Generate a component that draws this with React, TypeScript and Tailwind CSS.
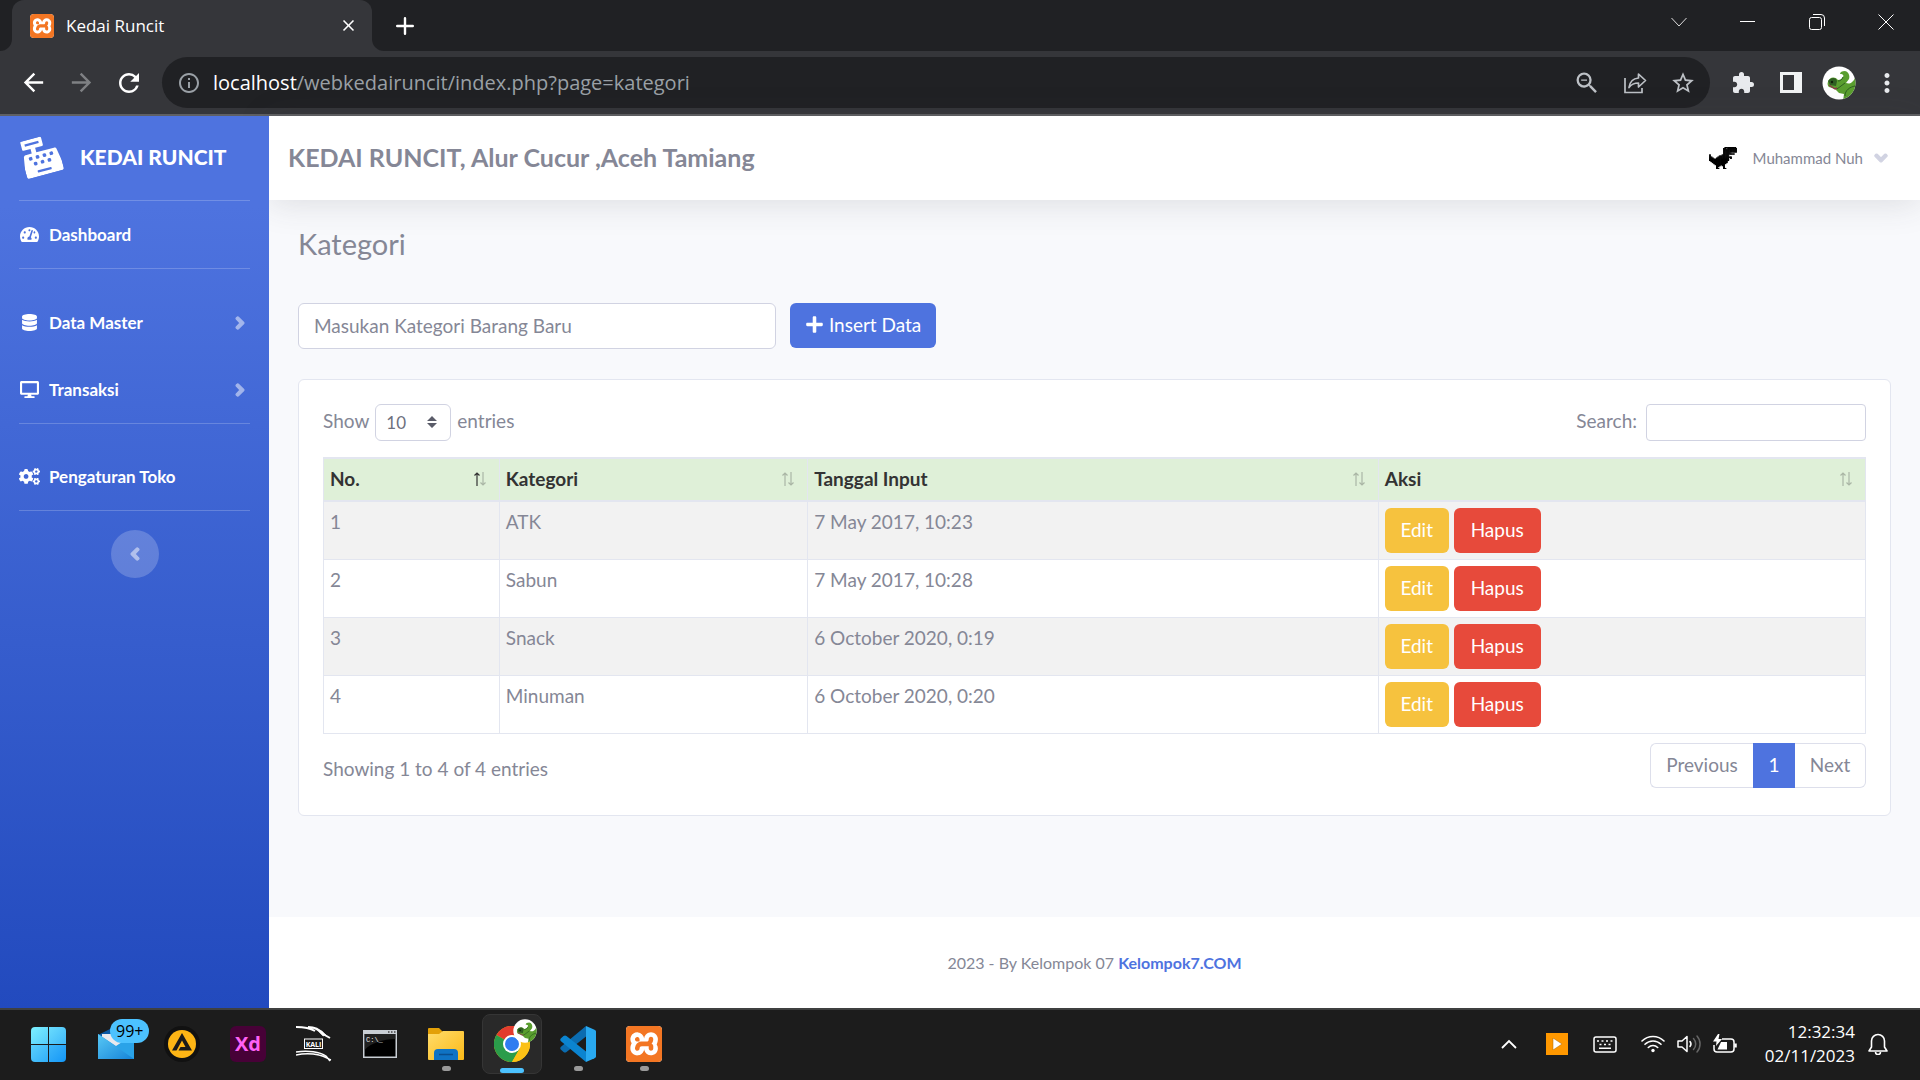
import React from "react";
import {
  FaTachometerAlt,
  FaDatabase,
  FaDesktop,
  FaCogs,
  FaAngleRight,
  FaAngleLeft,
  FaAngleDown,
  FaCashRegister,
  FaPlus,
} from "react-icons/fa";
import {
  MdArrowBack,
  MdArrowForward,
  MdRefresh,
  MdInfoOutline,
  MdZoomOut,
  MdStarBorder,
  MdExtension,
  MdMoreVert,
  MdClose,
  MdAdd,
} from "react-icons/md";
import { SiXampp } from "react-icons/si";

/* ---------- Drawings ---------- */

function XamppIcon({ className }: { className: string }) {
  return (
    <span className={`${className} grid shrink-0 overflow-hidden bg-white text-[#f37623]`}>
      <SiXampp className="size-full scale-105" />
    </span>
  );
}

function DinoAvatar({ className }: { className: string }) {
  return (
    <svg viewBox="0 0 34 34" className={className} aria-hidden="true">
      <clipPath id="avatar-clip">
        <circle cx="17" cy="17" r="16.5" />
      </clipPath>
      <circle cx="17" cy="17" r="16.5" fill="#fff" />
      <g clipPath="url(#avatar-clip)">
        <path
          d="M6 16c1-5 7-6 10-2 2 0 4-1 5-3 1-2 0-3-3-3 0-2 2-3 5-3 4 1 5 5 4 8l-3 4c3 1 6 1 9-5l2 4v12l-9 7h-5l1-7-5-1-4-4-6-2c-1-1-2-3-1-5z"
          fill="#5a9e2f"
        />
        <path d="M6 15c3-4 8-4 9 0l-1 5-6-1z" fill="#2f5f22" />
        <path d="M7 19l6 4 2-1" fill="none" stroke="#8c3a4a" strokeWidth="1.4" />
        <path d="M23 30c0-6 5-9 10-10M15 23l8-6M21 11c-1 3-3 4-5 4" fill="none" stroke="#2f5f22" strokeWidth="1" />
        <circle cx="10" cy="16" r="1.200" fill="#10210c" />
      </g>
    </svg>
  );
}

const DINO_ROWS = [
  "...........########.",
  "..........##.#######",
  "..........##########",
  "..........##########",
  "..........##########",
  "..........#####.....",
  "..........########..",
  "#........#####......",
  "#......#######......",
  "##....##########....",
  "###..#########.#....",
  "##############......",
  "##############......",
  ".############.......",
  "..###########.......",
  "...#########........",
  "....#######.........",
  ".....###.##.........",
  ".....##...#.........",
  ".....#....#.........",
  ".....##...##........",
];

function PixelDino() {
  return (
    <svg viewBox="0 0 20 21" preserveAspectRatio="none" className="h-[22px] w-7" aria-hidden="true">
      {DINO_ROWS.flatMap((row, y) =>
        row
          .split("")
          .map((c, x) =>
            c === "#" ? <rect key={`${x}-${y}`} x={x} y={y} width="1.4" height="1.4" /> : null,
          ),
      )}
    </svg>
  );
}

function ShareIcon() {
  return (
    <svg viewBox="0 0 24 24" className="size-6" fill="none" stroke="#bdc1c6" strokeWidth="1.7" aria-hidden="true">
      <path d="M2 7v14.500h17V17" />
      <path d="M15.500 3l7 6.500-7 6.500v-4c-4 0-7 1-9.500 4.500C6.700 11 10 7.500 15.500 7z" strokeLinejoin="round" />
    </svg>
  );
}

function SortArrows({ active }: { active?: boolean }) {
  return (
    <svg viewBox="0 0 14 16" className="mr-1.5 h-4 w-3.5 shrink-0" fill="none" stroke="#333" strokeWidth="1.200" aria-hidden="true">
      <path d="M4 15V2M1.500 4.500L4 2l2.500 2.500" opacity={active ? 1 : 0.3} />
      <path d="M10 1v13M7.500 11.500L10 14l2.500-2.500" opacity="0.3" />
    </svg>
  );
}

function MailIcon() {
  return (
    <svg viewBox="0 0 36 30" className="h-[30px] w-9" aria-hidden="true">
      <defs>
        <linearGradient id="mail-front" x1="0" y1="0" x2="1" y2="1">
          <stop offset="0" stopColor="#58c8f5" />
          <stop offset="1" stopColor="#1583d8" />
        </linearGradient>
      </defs>
      <path d="M0 6L18-3l18 9v12H0z" fill="#0c59a4" />
      <path d="M4 5h28v12H4z" fill="#e9e9ee" />
      <path d="M0 5l18 12L36 5v25H0z" fill="#2aa3e8" />
      <path d="M0 5l36 25H0z" fill="url(#mail-front)" />
    </svg>
  );
}

function AimpIcon() {
  return (
    <svg viewBox="0 0 36 36" className="size-9" aria-hidden="true">
      <circle cx="18" cy="18" r="18" fill="#111" />
      <circle cx="18" cy="18" r="14" fill="#fdb515" />
      <path d="M18 7l10 17.500H14.500l2-3.500h5L18 14.500l-5.500 10H8z" fill="#1a1a1a" />
    </svg>
  );
}

function KaliIcon() {
  return (
    <svg viewBox="0 0 36 36" className="size-9" fill="none" stroke="#fff" aria-hidden="true">
      <path d="M0 1c8 0 14 1 19 4M12 1c7 0 12 3 15 7l7 4" strokeWidth="2" />
      <path d="M18 2l8 3 4 4-3 1-5-5z" fill="#fff" strokeWidth="0.500" />
      <path d="M0 26c12-2 24 0 30 4l4 5M0 29c10-2 18-1 23 0 6 1 9 4 12 5" strokeWidth="1.500" />
      <rect x="8.500" y="13" width="18" height="9.500" strokeWidth="1" />
      <text x="17.500" y="20.500" fontSize="7" fontWeight="700" fill="#fff" stroke="none" textAnchor="middle" fontFamily="Open Sans, sans-serif">
        KALI
      </text>
    </svg>
  );
}

function TerminalIcon() {
  return (
    <svg viewBox="0 0 34 28" className="h-7 w-[34px]" aria-hidden="true">
      <rect x="0" y="0" width="34" height="28" fill="#c9ced4" />
      <rect x="1.500" y="4" width="31" height="22.500" fill="#000" />
      <path d="M16 4h16.500v5C20 9 8 13 1.500 20V4z" fill="#3a3a3a" opacity="0.550" />
      <path d="M25 2h1.500M28 2h1.500M31 2h1.500" stroke="#444" strokeWidth="1.500" />
      <text x="3" y="11.500" fontSize="7" fill="#eee" fontFamily="Liberation Mono, monospace">
        C:\_
      </text>
    </svg>
  );
}

function FolderIcon() {
  return (
    <svg viewBox="0 0 36 34" className="h-[34px] w-9" aria-hidden="true">
      <defs>
        <linearGradient id="folder" x1="0" y1="0" x2="1" y2="1">
          <stop offset="0" stopColor="#ffdc6b" />
          <stop offset="1" stopColor="#fbb917" />
        </linearGradient>
      </defs>
      <path d="M0 2a1 1 0 011-1h10l4 4v6H0z" fill="#e3a008" />
      <path d="M0 7h11l4-3h20a1 1 0 011 1v27a1 1 0 01-1 1H1a1 1 0 01-1-1z" fill="url(#folder)" />
      <path d="M6 33v-7a4 4 0 014-4h16a4 4 0 014 4v7z" fill="#0f73c4" />
      <path d="M11 27.500h14" stroke="#0a4f8f" strokeWidth="1.500" />
    </svg>
  );
}

function ChromeIcon() {
  return (
    <svg viewBox="0 0 36 36" className="size-9" aria-hidden="true">
      <circle cx="18" cy="18" r="18" fill="#fbc116" />
      <path d="M18 18L2.400 9A18 18 0 0133.600 9z" fill="#e33b2e" />
      <path d="M2.400 9A18 18 0 0018 36l7.800-13.500L18 18z" fill="#2a9c4a" />
      <path d="M18 9h15.600A18 18 0 0118 36l7.800-13.500z" fill="#fbc116" />
      <circle cx="18" cy="18" r="9" fill="#fff" />
      <circle cx="18" cy="18" r="7" fill="#2f7cf0" />
    </svg>
  );
}

function VsCodeIcon() {
  return (
    <svg viewBox="0 0 36 36" className="size-9" aria-hidden="true">
      <path d="M26 0v10.500L6.500 26c-1 .800-2 .700-3 0L1 23.700c-1-.900-1-2 0-3z" fill="#0b6cb0" />
      <path d="M1 12.300l2.500-2.300c1-.700 2-.800 3 0L26 25.500V36L1 15.300c-1-1-1-2.100 0-3z" fill="#0b84d0" />
      <path d="M26 0l8.500 3.700c1 .500 1.500 1 1.500 2v24.600c0 1-.500 1.500-1.500 2L26 36z" fill="#29a9f0" />
    </svg>
  );
}

/* ---------- Browser frame ---------- */

function TabBar() {
  return (
    <div className="flex h-[51px] items-stretch bg-[#202124] text-white">
      <div className="flex w-3 items-end bg-[#35363a]">
        <div className="h-full w-full rounded-br-xl bg-[#202124]" />
      </div>
      <div className="bg-[#202124]">
        <div className="flex h-full w-[360px] items-center rounded-t-xl bg-[#35363a] pr-3 pl-[18px]">
          <XamppIcon className="size-6 rounded-sm" />
          <span className="ml-3 flex-1 text-[17px]">Kedai Runcit</span>
          <button type="button" aria-label="Close tab" className="grid size-6 place-items-center">
            <MdClose className="size-[19px]" />
          </button>
        </div>
      </div>
      <div className="flex w-3 bg-[#35363a]">
        <div className="h-full w-full rounded-bl-xl bg-[#202124]" />
      </div>
      <button type="button" aria-label="New tab" className="grid w-[42px] place-items-center">
        <svg viewBox="0 0 18 18" className="size-[18px]" stroke="#fff" strokeWidth="2.400" strokeLinecap="round" aria-hidden="true">
          <path d="M9 1.200v15.600M1.200 9h15.600" />
        </svg>
      </button>
      <div className="ml-auto flex h-[43px] items-stretch">
        <button type="button" aria-label="Search tabs" className="grid w-[69px] place-items-center">
          <svg viewBox="0 0 16 16" className="size-4" fill="none" stroke="#ddd" aria-hidden="true">
            <path d="M.500 4L8 12l7.500-8" />
          </svg>
        </button>
        <button type="button" aria-label="Minimize" className="grid w-[69px] place-items-center">
          <span className="h-px w-[15px] bg-white" />
        </button>
        <button type="button" aria-label="Restore" className="grid w-[69px] place-items-center">
          <svg viewBox="0 0 16 16" className="size-4" fill="none" stroke="#fff" aria-hidden="true">
            <rect x="0.500" y="3.500" width="12" height="12" rx="2" />
            <path d="M4 .500h8a3.500 3.500 0 013.500 3.500v8" />
          </svg>
        </button>
        <button type="button" aria-label="Close" className="grid w-[69px] place-items-center">
          <svg viewBox="0 0 16 16" className="size-4" stroke="#fff" aria-hidden="true">
            <path d="M.500.500l15 15M15.500.500l-15 15" />
          </svg>
        </button>
      </div>
    </div>
  );
}

function Toolbar() {
  const btn = "grid h-12 w-12 shrink-0 place-items-center";
  return (
    <div className="flex items-center border-b-2 border-[#5f6063] bg-[#35363a] px-[9px] py-1.5 text-[#e8eaed]">
      <button type="button" aria-label="Back" className={btn}>
        <MdArrowBack className="size-[29px] text-white" />
      </button>
      <button type="button" aria-label="Forward" className={btn}>
        <MdArrowForward className="size-[29px] text-[#7f8184]" />
      </button>
      <button type="button" aria-label="Reload" className={btn}>
        <MdRefresh className="size-[30px] text-white" />
      </button>
      <div className="mx-[9px] flex h-[51px] min-w-0 flex-1 items-center rounded-full bg-[#202124] pr-[3px] pl-[15px]">
        <MdInfoOutline className="size-6 shrink-0 text-[#9aa0a6]" />
        <div className="ml-3 min-w-0 flex-1 truncate text-[20px] text-[#9aa0a6]">
          <span className="text-white">localhost</span>/webkedairuncit/index.php?page=kategori
        </div>
        <button type="button" aria-label="Zoom" className={btn}>
          <MdZoomOut className="size-7 text-[#bdc1c6]" />
        </button>
        <button type="button" aria-label="Share" className={btn}>
          <ShareIcon />
        </button>
        <button type="button" aria-label="Bookmark" className={btn}>
          <MdStarBorder className="size-[26px] text-[#bdc1c6]" />
        </button>
      </div>
      <button type="button" aria-label="Extensions" className={btn}>
        <MdExtension className="size-6" />
      </button>
      <button type="button" aria-label="Side panel" className={btn}>
        <svg viewBox="0 0 22 21" className="h-[21px] w-[22px]" aria-hidden="true">
          <path d="M0 0h22v21H0zM3 3v15h11V3z" fill="#f1f3f4" fillRule="evenodd" />
        </svg>
      </button>
      <button type="button" aria-label="Profile" className={btn}>
        <DinoAvatar className="size-[34px]" />
      </button>
      <button type="button" aria-label="Menu" className={btn}>
        <MdMoreVert className="size-[30px]" />
      </button>
    </div>
  );
}

/* ---------- Application ---------- */

function Divider() {
  return <hr className="mx-[19px] border-white/20" />;
}

function NavItem({ icon, label, arrow }: { icon: React.ReactNode; label: string; arrow?: boolean }) {
  return (
    <a href="#" className="flex h-[67px] items-center pr-[19px] pl-[19px] text-[17px] font-bold text-white">
      <span className="grid w-5 place-items-center text-[17px]">{icon}</span>
      <span className="ml-2.5 flex-1">{label}</span>
      {arrow && <FaAngleRight className="size-5 opacity-50" strokeWidth={28} />}
    </a>
  );
}

function Sidebar() {
  return (
    <aside className="relative z-20 w-[269px] shrink-0 bg-linear-to-b from-[#4e73df] from-10% to-[#224abe]">
      <a href="#" className="flex h-[84px] items-center pb-1 pl-[22px] text-[21px] font-black text-white">
        <FaCashRegister className="size-[38px] -rotate-[15deg]" />
        <span className="ml-5">KEDAI RUNCIT</span>
      </a>
      <Divider />
      <nav>
        <NavItem icon={<FaTachometerAlt className="size-[19px]" />} label="Dashboard" />
        <Divider />
        <div className="pt-5">
          <NavItem icon={<FaDatabase />} label="Data Master" arrow />
          <NavItem icon={<FaDesktop className="size-[19px]" />} label="Transaksi" arrow />
        </div>
        <Divider />
        <div className="pt-[19px]">
          <NavItem icon={<FaCogs className="size-[21px]" />} label="Pengaturan Toko" />
        </div>
        <Divider />
      </nav>
      <button
        type="button"
        aria-label="Collapse sidebar"
        className="mx-auto mt-[19px] grid size-12 place-items-center rounded-full bg-white/20 text-white"
      >
        <FaAngleLeft className="size-5 opacity-50" strokeWidth={28} />
      </button>
    </aside>
  );
}

const HEADERS = [
  { label: "No.", width: "w-[11.4%]" },
  { label: "Kategori", width: "w-[20%]" },
  { label: "Tanggal Input", width: "w-[37%]" },
  { label: "Aksi", width: "w-[31.6%]" },
];

const ROWS = [
  { no: 1, kategori: "ATK", tanggal: "7 May 2017, 10:23" },
  { no: 2, kategori: "Sabun", tanggal: "7 May 2017, 10:28" },
  { no: 3, kategori: "Snack", tanggal: "6 October 2020, 0:19" },
  { no: 4, kategori: "Minuman", tanggal: "6 October 2020, 0:20" },
];

function CategoryTable() {
  const cell = "border border-[#e3e6f0] p-1.5 align-top";
  return (
    <table className="mt-4 w-full table-fixed border-collapse border border-[#e3e6f0]">
      <thead>
        <tr className="bg-[#dff0d8] text-[#333]">
          {HEADERS.map((h, i) => (
            <th key={h.label} className={`${h.width} border border-y-2 border-[#e3e6f0] px-1.5 pt-1.5 pb-2 text-left font-bold`}>
              <div className="flex items-center justify-between">
                {h.label}
                <SortArrows active={i === 0} />
              </div>
            </th>
          ))}
        </tr>
      </thead>
      <tbody>
        {ROWS.map((r) => (
          <tr key={r.no} className="odd:bg-[#f2f2f2]">
            <td className={cell}>{r.no}</td>
            <td className={cell}>{r.kategori}</td>
            <td className={cell}>{r.tanggal}</td>
            <td className={cell}>
              <div className="flex gap-[5px] text-white">
                <button type="button" className="h-[45px] w-16 rounded-md bg-[#f6c23e] pb-0.5">
                  Edit
                </button>
                <button type="button" className="h-[45px] w-[87px] rounded-md bg-[#e74a3b] pb-0.5">
                  Hapus
                </button>
              </div>
            </td>
          </tr>
        ))}
      </tbody>
    </table>
  );
}

function Card() {
  return (
    <section className="mt-[30px] rounded-md border border-[#e3e6f0] bg-white px-6 pt-6 pb-[27px]">
      <div className="flex items-center justify-between">
        <div className="flex items-center">
          <label htmlFor="entries" className="pb-1">
            Show
          </label>
          <div className="relative mx-[6px]">
            <select
              id="entries"
              defaultValue="10"
              className="block h-[37px] w-[76px] appearance-none rounded-md border border-[#d1d3e2] bg-white pl-2.5 text-[17px] text-[#6e707e]"
            >
              <option>10</option>
              <option>25</option>
              <option>50</option>
              <option>100</option>
            </select>
            <svg viewBox="0 0 10 12" className="pointer-events-none absolute top-3 right-3.5 h-3 w-2.5" fill="#5a5c69" aria-hidden="true">
              <path d="M0 5l5-5 5 5zM0 7l5 5 5-5z" />
            </svg>
          </div>
          <span className="pb-1">entries</span>
        </div>
        <label className="flex items-center gap-[9px]">
          <span className="pb-1">Search:</span>
          <input type="search" className="h-[37px] w-[220px] rounded border border-[#d1d3e2] bg-white px-2.5" />
        </label>
      </div>
      <CategoryTable />
      <div className="mt-[9px] flex items-start justify-between">
        <p className="pt-3">Showing 1 to 4 of 4 entries</p>
        <nav aria-label="Pagination" className="flex h-[45px]">
          <button type="button" className="w-[103px] rounded-l-md border border-r-0 border-[#dddfeb] pb-0.5">
            Previous
          </button>
          <button type="button" className="w-[42px] bg-[#4e73df] pb-0.5 text-white">
            1
          </button>
          <button type="button" className="w-[71px] rounded-r-md border border-l-0 border-[#dddfeb] pb-0.5">
            Next
          </button>
        </nav>
      </div>
    </section>
  );
}

function Content() {
  return (
    <div className="flex min-w-0 flex-1 flex-col bg-[#f8f9fc]">
      <header className="relative z-10 flex h-[84px] items-center justify-between bg-white pr-[29px] pl-[19px] shadow-[0_3px_34px_rgba(58,59,69,0.15)]">
        <h1 className="pb-0.5 text-[25px] font-bold">KEDAI RUNCIT, Alur Cucur ,Aceh Tamiang</h1>
        <button type="button" className="flex items-center text-[15px]">
          <PixelDino />
          <span className="ml-4">Muhammad Nuh</span>
          <FaAngleDown className="ml-2 size-5 text-[#d1d3e2]" strokeWidth={28} />
        </button>
      </header>
      <main className="px-[29px] pt-[27px]">
        <h2 className="text-[29px] leading-[34px]">Kategori</h2>
        <form className="mt-[42px] flex gap-3.5" onSubmit={(e) => e.preventDefault()}>
          <input
            aria-label="Kategori"
            placeholder="Masukan Kategori Barang Baru"
            className="h-[46px] w-[30%] rounded-md border border-[#d1d3e2] bg-white px-[15px] pb-0.5 placeholder:text-[#858796]"
          />
          <button
            type="submit"
            className="flex h-[45px] items-center gap-[5px] rounded-md bg-[#4e73df] px-[15px] pb-0.5 text-white"
          >
            <FaPlus className="size-[19px]" />
            Insert Data
          </button>
        </form>
        <Card />
      </main>
      <footer className="mt-auto bg-white pt-[34px] pb-[33px] text-center text-[16px] leading-6">
        2023 - By Kelompok 07{" "}
        <a href="#" className="font-bold text-[#4e73df]">
          Kelompok7.COM
        </a>
      </footer>
    </div>
  );
}

/* ---------- Taskbar ---------- */

function TaskItem({ label, running, children }: { label: string; running?: boolean; children: React.ReactNode }) {
  return (
    <button type="button" aria-label={label} className="relative grid h-full w-[66px] place-items-center">
      {children}
      {running && <span className="absolute bottom-[7px] left-[29px] h-[5px] w-[9px] rounded-full bg-[#9a9a9a]" />}
    </button>
  );
}

function Taskbar() {
  return (
    <footer className="flex h-[72px] items-center border-t-2 border-[#3f4040] bg-[#1c1c1c] pr-8 pb-0.5 pl-[15px] text-white">
      <TaskItem label="Start">
        <span className="grid size-[35px] grid-cols-2 gap-px">
          <span className="rounded-tl-sm bg-linear-to-br from-[#7cf0ff] to-[#55cdfb]" />
          <span className="rounded-tr-sm bg-linear-to-br from-[#6adcfd] to-[#3fb9fa]" />
          <span className="rounded-bl-sm bg-linear-to-br from-[#5ad0fc] to-[#30aef9]" />
          <span className="rounded-br-sm bg-linear-to-br from-[#3cb6fa] to-[#1197f7]" />
        </span>
      </TaskItem>
      <div className="ml-0.5 flex h-full">
        <TaskItem label="Mail">
          <MailIcon />
          <span className="absolute top-[9px] left-[27px] rounded-full bg-[#4cc2ff] px-1.5 text-[16px] leading-6 text-black">99+</span>
        </TaskItem>
        <TaskItem label="AIMP">
          <AimpIcon />
        </TaskItem>
        <TaskItem label="Adobe XD">
          <span className="grid size-9 place-items-center rounded-md bg-[#470137] text-[20px] leading-none font-bold text-[#ff61f6]">Xd</span>
        </TaskItem>
        <TaskItem label="Kali Linux">
          <KaliIcon />
        </TaskItem>
        <TaskItem label="Command Prompt">
          <TerminalIcon />
        </TaskItem>
        <TaskItem label="File Explorer" running>
          <FolderIcon />
        </TaskItem>
        <TaskItem label="Chrome">
          <span className="relative grid size-[60px] place-items-center rounded-lg border border-[#353535] bg-[#292929]">
            <ChromeIcon />
            <DinoAvatar className="absolute top-1 right-1 size-6" />
            <span className="absolute bottom-0 h-[5px] w-6 rounded-full bg-[#4cc2ff]" />
          </span>
        </TaskItem>
        <TaskItem label="Visual Studio Code" running>
          <VsCodeIcon />
        </TaskItem>
        <TaskItem label="XAMPP" running>
          <XamppIcon className="size-9 rounded-sm" />
        </TaskItem>
      </div>

      <div className="ml-auto flex items-center">
        <button type="button" aria-label="Show hidden icons">
          <svg viewBox="0 0 16 10" className="h-2.5 w-4" fill="none" stroke="#fff" strokeWidth="1.800" aria-hidden="true">
            <path d="M1 9l7-7 7 7" />
          </svg>
        </button>
        <span className="ml-[29px] grid size-[22px] place-items-center bg-[#ff9800]">
          <svg viewBox="0 0 10 12" className="h-3 w-2.5" fill="#fff" stroke="#a86400" strokeWidth="0.500" aria-hidden="true">
            <path d="M1 0l9 6-9 6z" />
          </svg>
        </span>
        <svg viewBox="0 0 24 17" className="ml-[25px] h-[17px] w-6" fill="none" stroke="#fff" strokeWidth="1.500" aria-hidden="true">
          <rect x="1" y="1" width="22" height="15" rx="2" />
          <path d="M4 5h2M8.500 5h2M13 5h2M17.500 5h2M6.500 8.500h2M11 8.500h2M15.500 8.500h2M6 12.200h12" />
        </svg>
        <svg viewBox="0 0 24 18" className="ml-6 h-[18px] w-6" fill="none" stroke="#fff" strokeWidth="1.600" strokeLinecap="round" aria-hidden="true">
          <path d="M1 6a15.600 15.600 0 0122 0M4 9.300a11.300 11.300 0 0116 0M7.300 12.500a6.700 6.700 0 019.400 0" />
          <circle cx="12" cy="15.500" r="1.700" fill="#fff" stroke="none" />
        </svg>
        <svg viewBox="0 0 25 20" className="ml-3 h-5 w-[25px]" fill="none" stroke="#fff" strokeWidth="1.500" strokeLinecap="round" strokeLinejoin="round" aria-hidden="true">
          <path d="M1 7v6h4l5 4.500v-15L5 7z" />
          <path d="M13 7.500a4 4 0 010 5" />
          <path d="M16.500 4.500a8 8 0 010 11M20 2a12 12 0 010 16" stroke="#666" />
        </svg>
        <svg viewBox="0 0 24 20" className="ml-[11px] h-5 w-6" fill="none" stroke="#fff" strokeWidth="1.500" strokeLinejoin="round" aria-hidden="true">
          <path d="M9 5h9a3 3 0 013 3v7a3 3 0 01-3 3H4a3 3 0 01-3-3v-4" />
          <path d="M22.500 9.500v4" strokeWidth="2.500" />
          <path d="M8 8h6v7.500H4.500z" fill="#fff" stroke="none" />
          <path d="M5 0L0 7.500h3.500L3 12l6-7H5.500L6.500 0z" fill="#fff" stroke="none" />
        </svg>
        <div className="ml-7 text-right text-[17px] leading-6">
          <div>12:32:34</div>
          <div>02/11/2023</div>
        </div>
        <svg viewBox="0 0 20 22" className="ml-[13px] h-[22px] w-5" fill="none" stroke="#fff" strokeWidth="1.600" strokeLinejoin="round" aria-hidden="true">
          <path d="M3.500 14V8a6.500 6.500 0 0113 0v6l2.500 4H1z" />
          <path d="M7.500 19a2.500 2.500 0 005 0" />
        </svg>
      </div>
    </footer>
  );
}

export default function App() {
  return (
    <div className="flex min-h-screen flex-col bg-[#1c1c1c] font-['Open_Sans',sans-serif]">
      <TabBar />
      <Toolbar />
      <div className="flex flex-1 font-[Lato,sans-serif] text-[19px] leading-[27px] text-[#858796]">
        <Sidebar />
        <Content />
      </div>
      <Taskbar />
    </div>
  );
}
